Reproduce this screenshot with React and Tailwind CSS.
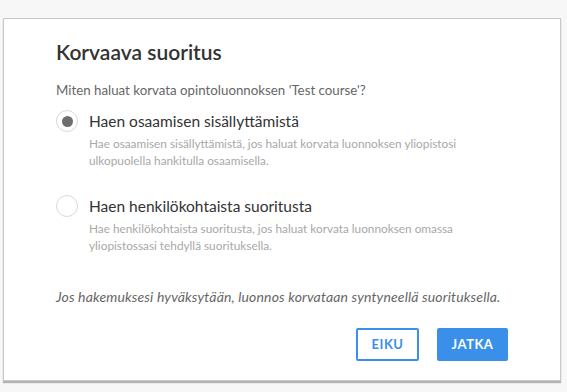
export default function App() {
  const options = [
    {
      title: "Haen osaamisen sisällyttämistä",
      desc: "Hae osaamisen sisällyttämistä, jos haluat korvata luonnoksen yliopistosi ulkopuolella hankitulla osaamisella.",
      checked: true,
    },
    {
      title: "Haen henkilökohtaista suoritusta",
      desc: "Hae henkilökohtaista suoritusta, jos haluat korvata luonnoksen omassa yliopistossasi tehdyllä suorituksella.",
      checked: false,
    },
  ];

  return (
    <div className="w-[567px] h-[392px] bg-[#f7f7f7] pt-[18px] pl-[3px] font-['Lato',sans-serif]">
      <div className="w-[558px] h-[363px] bg-white border border-[#c8c8c8] shadow-[0_2px_1px_#b3b3b3] pt-[19px] pl-[52px] pr-[52px]">
        <h1 className="text-[21px] leading-[28px] font-semibold text-[#333]">
          Korvaava suoritus
        </h1>
        <p className="mt-[15px] text-[13.3px] leading-[18px] text-[#666]">
          Miten haluat korvata opintoluonnoksen 'Test course'?
        </p>
        <div className="mt-[11px] flex flex-col gap-[26px]">
          {options.map((opt) => (
            <div key={opt.title} className="flex gap-[11px]">
              <div className="w-[22px] h-[22px] rounded-full border border-[#d9d9d9] bg-white flex items-center justify-center shrink-0">
                {opt.checked && (
                  <div className="w-[11px] h-[11px] rounded-full bg-[#6e6e6e]" />
                )}
              </div>
              <div>
                <div className="text-[15.5px] leading-[22px] text-[#333]">
                  {opt.title}
                </div>
                <div className="mt-[3px] w-[372px] text-[11.8px] leading-[17px] text-[#a8a8a8]">
                  {opt.desc}
                </div>
              </div>
            </div>
          ))}
        </div>
        <p className="mt-[34px] text-[14px] tracking-[0.15px] leading-[18px] italic text-[#666]">
          Jos hakemuksesi hyväksytään, luonnos korvataan syntyneellä suorituksella.
        </p>
        <div className="mt-[22px] flex justify-end gap-[18px]">
          <button className="w-[63px] h-[33px] border-2 border-[#3a8fe8] rounded-[2px] bg-white text-[#3a8fe8] text-[13px] font-bold tracking-[0.5px]">
            EIKU
          </button>
          <button className="w-[71px] h-[33px] rounded-[2px] bg-[#3a8fe8] text-white text-[13px] font-bold tracking-[0.5px]">
            JATKA
          </button>
        </div>
      </div>
    </div>
  );
}
